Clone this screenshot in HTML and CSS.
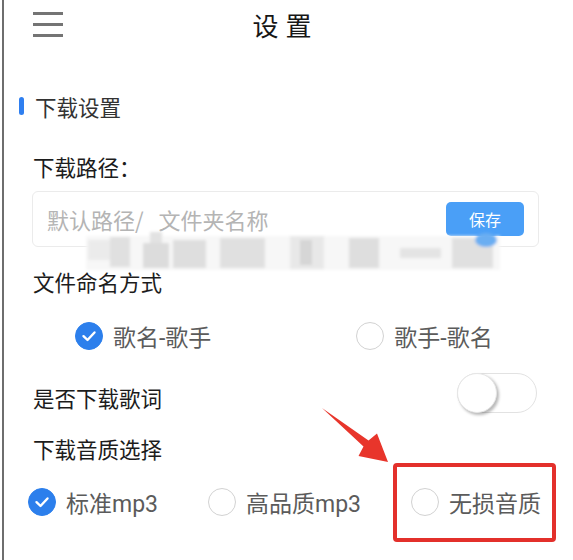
FILE: index.html
```html
<!DOCTYPE html>
<html lang="zh-CN">
<head>
<meta charset="utf-8">
<title>设置</title>
<link rel="stylesheet" href="styles.css">
</head>
<body>
<div class="page">
  <header class="topbar">
    <div class="menu"><span></span><span></span><span></span></div>
    <h1 class="title">设置</h1>
    <div></div>
  </header>

  <section class="settings">
    <div class="section-title"><i class="bar"></i>下载设置</div>

    <div class="label label-path">下载路径：</div>
    <div class="path-box">
      <span class="placeholder">默认路径/ 文件夹名称</span>
      <button class="save">保存</button>
    </div>

    <div class="label label-naming">文件命名方式</div>
    <div class="radios radios-naming">
      <div class="radio"><span class="dot on"><svg viewBox="0 0 28 28"><polyline points="8.5,14.2 12.5,18 19.5,10.5"/></svg></span>歌名-歌手</div>
      <div class="radio"><span class="dot"></span>歌手-歌名</div>
    </div>

    <div class="switch-row">
      <span class="label">是否下载歌词</span>
      <span class="switch"><span class="knob"></span></span>
    </div>

    <div class="label label-quality">下载音质选择</div>
    <div class="radios radios-quality">
      <div class="radio"><span class="dot on"><svg viewBox="0 0 28 28"><polyline points="8.5,14.2 12.5,18 19.5,10.5"/></svg></span>标准mp3</div>
      <div class="radio"><span class="dot"></span>高品质mp3</div>
      <div class="radio"><span class="dot"></span>无损音质</div>
    </div>
  </section>

  <svg class="overlay" viewBox="0 0 573 560" width="573" height="560">
    <defs>
      <filter id="soft" x="-10%" y="-30%" width="120%" height="160%"><feGaussianBlur stdDeviation="1.5"/></filter>
    </defs>
    <g filter="url(#soft)">
      <rect x="86" y="236" width="414" height="34" fill="#f7f7f7"/>
      <rect x="88" y="240" width="22" height="20" fill="#ebebeb"/>
      <rect x="110" y="237" width="20" height="30" fill="#e0e0e0"/>
      <rect x="143" y="243" width="26" height="25" fill="#dcdcdc"/>
      <rect x="150" y="232" width="12" height="11" fill="#e2e2e2"/>
      <rect x="173" y="240" width="33" height="28" fill="#dedede"/>
      <rect x="220" y="238" width="45" height="30" fill="#e0e0e0"/>
      <rect x="290" y="236" width="34" height="33" fill="#e8e8e8"/>
      <rect x="300" y="240" width="12" height="25" fill="#d6d6d6"/>
      <rect x="349" y="238" width="30" height="30" fill="#dedede"/>
      <rect x="400" y="248" width="41" height="10" fill="#e4e4e4"/>
      <rect x="452" y="238" width="41" height="30" fill="#e0e0e0"/>
      <ellipse cx="486" cy="240" rx="11" ry="7" fill="#6aaef2"/>
    </g>
    <polygon class="arrow" points="322,408 368.5,440.4 377,433.5 388,462 358.5,456 363.5,446.6"/>
  </svg>
  <div class="highlight"></div>
</div>
</body>
</html>
```

FILE: styles.css
```css
* {
  box-sizing: border-box;
}

html,
body {
  margin: 0;
  height: 100%;
}

body {
  padding-left: 2px;
  background: #fff;
  font-family: Roboto, "Noto Sans CJK SC", sans-serif;
  overflow: hidden;
}

.page {
  position: relative;
  height: 560px;
  border-left: 2px solid #6e6e6e;
}

/* ---------- top bar ---------- */
.topbar {
  display: grid;
  grid-template-columns: 1fr auto 1fr;
  align-items: start;
  height: 50px;
  padding-right: 6px;
}

.menu {
  margin: 11.5px 0 0 29px;
  width: 30px;
  display: flex;
  flex-direction: column;
  gap: 8px;
}

.menu span {
  display: block;
  height: 3px;
  background: #747474;
}

.title {
  margin: 0;
  font-family: "Noto Sans CJK SC", sans-serif;
  font-size: 26px;
  font-weight: 400;
  letter-spacing: 7px;
  line-height: 50px;
  color: #161616;
}

/* ---------- settings ---------- */
.settings {
  padding: 0 36px 0 29px;
}

.section-title {
  display: flex;
  align-items: center;
  height: 30px;
  margin: 41px 0 0 -14px;
  font-family: "Noto Sans CJK SC", sans-serif;
  font-size: 21.5px;
  color: #333;
}

.bar {
  width: 5px;
  height: 18px;
  border-radius: 3px;
  background: #2f7ff0;
  margin-right: 11px;
}

.label {
  font-family: "Noto Sans CJK SC", sans-serif;
  font-size: 21.5px;
  line-height: 30px;
  color: #1c1c1c;
}

.label-path {
  margin-top: 31px;
}

.path-box {
  display: flex;
  align-items: center;
  justify-content: space-between;
  height: 56px;
  margin: 9px -2px 0 -1px;
  padding: 0 14px;
  border: 1px solid #ebebeb;
  border-radius: 6px;
}

.placeholder {
  font-family: "Noto Sans CJK SC", sans-serif;
  font-size: 22px;
  color: #b4b4b4;
  word-spacing: 10px;
}

.save {
  width: 78px;
  height: 34px;
  border: 0;
  border-radius: 5px;
  background: #4a9ff7;
  color: #fff;
  font-family: "Noto Sans CJK SC", sans-serif;
  font-size: 16px;
  padding: 0;
}

.label-naming {
  margin-top: 20px;
}

.radios {
  display: flex;
  align-items: center;
  height: 40px;
  white-space: nowrap;
}

.radios-naming {
  margin: 19px 0 0 42px;
  gap: 145px;
}

.radios-quality {
  margin: 18px -40px 0 -5px;
  gap: 50px;
}

.radio {
  display: flex;
  align-items: center;
  flex-shrink: 0;
  gap: 10px;
  font-size: 23px;
  color: #5b5b5b;
}

.dot {
  display: flex;
  flex-shrink: 0;
  width: 28px;
  height: 28px;
  border-radius: 50%;
  border: 1.5px solid #d2d2d2;
}

.dot.on {
  background: #2c7fec;
  border-color: #2c7fec;
}

.dot svg {
  margin: -1.5px;
  width: 28px;
  height: 28px;
  fill: none;
  stroke: #fff;
  stroke-width: 2.4;
  stroke-linecap: round;
  stroke-linejoin: round;
}

.switch-row {
  display: flex;
  align-items: flex-end;
  justify-content: space-between;
  height: 40px;
  margin-top: 17px;
}

.switch {
  display: flex;
  width: 80px;
  height: 40px;
  border-radius: 20px;
  border: 1px solid #e2e2e2;
  background: #fff;
}

.knob {
  width: 40px;
  height: 40px;
  margin: -1px;
  border-radius: 50%;
  background: #fff;
  border: 1px solid #e6e6e6;
  box-shadow: 2px 2px 3px rgba(0, 0, 0, 0.28);
}

.label-quality {
  margin-top: 21px;
}

/* ---------- annotation overlays ---------- */
.overlay {
  position: absolute;
  left: -4px;
  top: 0;
  pointer-events: none;
}

.arrow {
  fill: #e8352b;
}

.highlight {
  position: absolute;
  left: 389px;
  top: 463px;
  width: 163px;
  height: 79px;
  border: 4px solid #e3302b;
  border-radius: 4px;
}
```
